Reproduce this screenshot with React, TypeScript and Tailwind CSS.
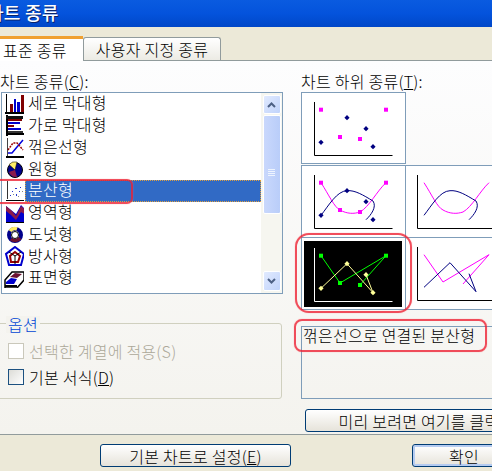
import React from "react";

const F = { s: [[20, 17.7], [85, 17.7], [39, 45], [59, 47]], d: [[46, 25.7], [65, 36.7], [20, 50.3], [72, 54.7]] };
const sq = (x: number, y: number, c: string, k: number) => <rect key={k} x={x - 2} y={y - 2} width={4} height={4} fill={c} />;
const di = (x: number, y: number, c: string, k: number) => <path key={k} d={`M${x} ${y - 2.6}L${x + 2.6} ${y}L${x} ${y + 2.6}L${x - 2.6} ${y}Z`} fill={c} />;

const smoothM = "M20 17.7C28 30 33 42 39 45C46 49 53 49 59 47C68 42 76 26 85 17.7";
const smoothN = "M20 50.3C28 40 36 26 46 25.7C54 25 62 30 72 36C76 42 70 50 65 54.7";
const lineM = "M20 17.7L39 45L85 17.7L59 47";
const lineN = "M20 50.3L46 25.7L72 54.7L65 36.7";

function Chart({ markers, m, n, axis = "#000", mc = "#ff00ff", nc = "#000080" }: { markers?: boolean; m?: string; n?: string; axis?: string; mc?: string; nc?: string }) {
  return (
    <svg width="104" height="72" viewBox="0 0 104 72" className="block -ml-px -mt-px">
      <path d="M13.5 10V63.5H91.5" fill="none" stroke={axis} strokeWidth="1" />
      {m && <path d={m} fill="none" stroke={mc} strokeWidth="1" />}
      {n && <path d={n} fill="none" stroke={nc} strokeWidth="1" />}
      {markers && F.s.map((p, i) => sq(p[0], p[1], mc, i))}
      {markers && F.d.map((p, i) => di(p[0], p[1], nc, i))}
    </svg>
  );
}

const Ic = ({ children }: { children: React.ReactNode }) => (
  <svg width="21" height="21" viewBox="0 0 21 21" className="shrink-0" shapeRendering="crispEdges">{children}</svg>
);
const icons = [
  <Ic key="0"><path d="M3 1V20" stroke="#000" fill="none" /><rect x="7" y="11" width="3" height="8" fill="#800000" /><rect x="11" y="6" width="2" height="13" fill="#00c" /><rect x="14" y="9" width="3" height="10" fill="#00c" /><rect x="18" y="2" width="3" height="17" fill="#800000" /><rect x="2" y="19" width="21" height="2" fill="#000" /></Ic>,
  <Ic key="1"><rect x="3" y="0" width="2" height="21" fill="#000" /><rect x="3" y="1" width="17" height="3" fill="#111" /><rect x="5" y="4" width="14" height="2" fill="#800000" /><rect x="5" y="7" width="12" height="2" fill="#00c" /><rect x="5" y="10" width="6" height="2" fill="#800000" /><rect x="5" y="13" width="13" height="2" fill="#00c" /><rect x="5" y="16" width="15" height="2" fill="#333" /><rect x="3" y="18" width="20" height="2" fill="#000" /></Ic>,
  <Ic key="2"><path d="M4 1V19" stroke="#444" /><rect x="3" y="19" width="20" height="2" fill="#000" /><path d="M5 16L9 16L14 10L20 3" stroke="#00d" fill="none" strokeWidth="1.5" shapeRendering="auto" /><path d="M5 13L10 6L14 6L20 13" stroke="#900" fill="none" strokeDasharray="2 1" strokeWidth="1.5" shapeRendering="auto" /></Ic>,
  <Ic key="3"><g shapeRendering="auto"><circle cx="12" cy="11" r="7.5" fill="#00008b" stroke="#000" /><path d="M12 11L6 5.5A8 8 0 0 1 14 3Z" fill="#ffee66" stroke="#000" strokeWidth=".5" /><path d="M12 11L6 13A7 7 0 0 0 14 18Z" fill="#8b1a4b" /></g></Ic>,
  <Ic key="4"><path d="M4 1V19" stroke="#333" /><rect x="3" y="20" width="20" height="1" fill="#000" /><g fill="#2233cc"><rect x="7" y="15" width="1" height="1" /><rect x="9" y="11" width="1" height="1" /><rect x="12" y="8" width="2" height="1" /><rect x="13" y="14" width="1" height="2" /><rect x="17" y="7" width="1" height="1" /><rect x="16" y="11" width="1" height="1" /></g><g fill="#888"><rect x="10" y="14" width="1" height="1" /><rect x="15" y="16" width="1" height="1" /><rect x="19" y="11" width="1" height="1" /></g></Ic>,
  <Ic key="5"><g shapeRendering="auto"><path d="M3 20V4L8 8L13 12L18 3L23 8V20Z" fill="#00c" /><path d="M3 4L9 9L13 14L18 4L23 8V13L18 10L13 18L8 13L3 9Z" fill="#8b1a4b" /></g><rect x="3" y="20" width="20" height="1" fill="#000" /></Ic>,
  <Ic key="6"><g shapeRendering="auto"><circle cx="12" cy="11" r="6" fill="none" stroke="#00008b" strokeWidth="4" /><path d="M7 7A6 6 0 0 1 14 5" fill="none" stroke="#ffee66" strokeWidth="3.5" /><path d="M8 15A6 6 0 0 0 17 14" fill="none" stroke="#6b1030" strokeWidth="3.5" /><circle cx="12" cy="11" r="3.5" fill="#fff" stroke="#000" /></g></Ic>,
  <Ic key="7"><g shapeRendering="auto" fill="none"><path d="M12 1L21 8L18 19H6L3 8Z" stroke="#00c" strokeWidth="2" /><path d="M12 6L17 10L15 16H8L7 10Z" stroke="#900" strokeWidth="2" /><path d="M12 10V18M12 10L6 6M12 10L18 6" stroke="#000" /></g></Ic>,
  <Ic key="8"><g shapeRendering="auto"><path d="M2 20L2 13L9 5H21V13L14 21H2Z" fill="#fff" stroke="#000" strokeWidth="1.5" /><path d="M7 10L12 6L19 7L14 11Z" fill="#6b1030" /><path d="M3 15L8 11L14 12L11 17H3Z" fill="#00c" /><path d="M2 19H14" stroke="#000" strokeWidth="2" /></g></Ic>,
];
const names = ["세로 막대형", "가로 막대형", "꺾은선형", "원형", "분산형", "영역형", "도넛형", "방사형", "표면형"];

function XpBtn({ className, children }: { className: string; children: React.ReactNode }) {
  return (
    <div className={`flex items-center justify-center h-[23px] shrink-0 rounded-[3px] border border-[#003c74] bg-gradient-to-b from-white to-[#e6e3da] text-black ${className}`}>
      <span className="whitespace-nowrap">{children}</span>
    </div>
  );
}

export default function App() {
  return (
    <div className="relative w-[492px] h-[471px] overflow-hidden bg-[#ece9d8] text-[16px] leading-none text-black font-['Noto_Sans_CJK_KR','Liberation_Sans',sans-serif] font-light [letter-spacing:0.25px]">
      {/* title */}
      <div className="h-[27px] overflow-hidden whitespace-nowrap bg-gradient-to-b from-[#0a5be0] via-[#0453dc] to-[#0047c8] text-white text-[18px] font-medium pt-[3px] [text-shadow:1px_1px_0_#0a246a]">
        <span className="inline-block -ml-[13px]">차트 종류</span>
      </div>

      {/* tabs */}
      <div className="h-[33px] flex items-end relative">
        <div className="relative z-10 w-[83px] h-[25px] -mb-[1px] bg-white border-t-[3px] border-[#f0a030] pl-[3px] pt-[3px] whitespace-nowrap">표준 종류</div>
        <div className="w-[138px] h-[23px] flex items-center justify-center bg-gradient-to-b from-white to-[#ecebe4] border border-b-0 border-[#919b9c] rounded-t-[3px] whitespace-nowrap">사용자 지정 종류</div>
      </div>

      {/* panel */}
      <div className="h-[375px] border-t border-b border-[#919b9c] bg-gradient-to-b from-[#fdfdfe] to-[#f4f3ee] flex overflow-hidden">
        {/* left */}
        <div className="w-[301px] shrink-0 flex flex-col pt-[12px]">
          <div className="h-[18px] whitespace-nowrap">차트 종류(<u>C</u>):</div>
          <div className="mt-[1px] ml-[1px] w-[282px] h-[202px] border border-[#7f9db9] bg-white flex">
            <div className="flex-1 flex flex-col">
              {names.map((n, i) => (
                <div key={n} className="h-[21.75px] flex items-center whitespace-nowrap">
                  <div className="w-[23px] pl-[1px] shrink-0 flex items-center">{icons[i]}</div>
                  <div className={i === 4 ? "flex-1 h-full flex items-center bg-[#316ac5] text-white border border-dotted border-[#e0a040] pb-[3px] pl-[2px]" : "pb-[3px] flex-1 pl-[3px]"}>{n}</div>
                </div>
              ))}
            </div>
            <div className="w-[21px] shrink-0 bg-[#f6f6f0] flex flex-col items-center py-[2px]">
              <div className="w-[18px] h-[19px] rounded-[2px] border border-white bg-gradient-to-br from-[#e1eafe] to-[#c0d3fb] flex items-center justify-center">
                <svg width="9" height="6" viewBox="0 0 9 6"><path d="M1 5L4.5 1.5L8 5" fill="none" stroke="#4d6185" strokeWidth="2" /></svg>
              </div>
              <div className="mt-[1px] w-[18px] h-[99px] rounded-[2px] border border-white bg-gradient-to-r from-[#c9d8fc] to-[#b9cdf9] flex flex-col items-center justify-center gap-[1px] pt-[16px]">
                <i className="block w-[7px] h-[1px] bg-[#eef4fe]" /><i className="block w-[7px] h-[1px] bg-[#eef4fe]" /><i className="block w-[7px] h-[1px] bg-[#eef4fe]" /><i className="block w-[7px] h-[1px] bg-[#eef4fe]" />
              </div>
              <div className="mt-auto w-[18px] h-[20px] rounded-[2px] border border-white bg-gradient-to-br from-[#e1eafe] to-[#c0d3fb] flex items-center justify-center">
                <svg width="9" height="6" viewBox="0 0 9 6"><path d="M1 1L4.5 4.5L8 1" fill="none" stroke="#4d6185" strokeWidth="2" /></svg>
              </div>
            </div>
          </div>
          {/* options */}
          <div className="relative ml-[-6px] mt-[29px] w-[288px] h-[76px] border border-[#d0d0bf] rounded-[3px] pl-[13px] pt-[14px]">
            <div className="absolute left-[11px] -top-[8px] bg-[#f4f3ee] px-[2px] text-[#0046d5] h-[17px]">옵션</div>
            <div className="flex items-center gap-[5px] h-[26px] text-[#aca899] whitespace-nowrap">
              <span className="w-[16px] h-[16px] border border-[#cac8bb] bg-white shrink-0" />
              <span>선택한 계열에 적용(S)</span>
            </div>
            <div className="flex items-center gap-[5px] h-[26px] whitespace-nowrap">
              <span className="w-[16px] h-[16px] border border-[#1c5180] bg-gradient-to-br from-[#dcdcd7] to-white shrink-0" />
              <span>기본 서식(<u>D</u>)</span>
            </div>
          </div>
        </div>

        {/* right */}
        <div className="w-[240px] shrink-0 flex flex-col pt-[12px]">
          <div className="h-[18px] whitespace-nowrap">차트 하위 종류(<u>T</u>):</div>
          <div className="mt-[1px] w-[105px] h-[72px] border border-[#7f9db9] overflow-hidden bg-white"><Chart markers /></div>
          <div className="mt-[1px] grid grid-cols-[105px_105px] grid-rows-[72px_73px] w-[210px]">
            <div className="border border-[#7f9db9] border-b-0 bg-white overflow-hidden"><Chart markers m={smoothM} n={smoothN} /></div>
            <div className="border-t border-[#7f9db9] bg-white overflow-hidden"><div className="-ml-[1px]"><Chart m={smoothM} n={smoothN} /></div></div>
            <div className="border border-[#7f9db9] bg-white pt-[3px] pl-[2px] overflow-hidden">
              <div className="bg-black w-[98px] h-[66px] overflow-hidden"><div className="-mt-[3px] -ml-[2px]"><Chart markers m={lineM} n={lineN} axis="#fff" mc="#00ff00" nc="#ffff99" /></div></div>
            </div>
            <div className="border-t border-b border-[#7f9db9] bg-white overflow-hidden"><div className="-ml-[1px]"><Chart m={lineM} n={lineN} /></div></div>
          </div>
          <div className="mt-[16px] w-[210px] h-[73px] border border-[#7f9db9] pl-[1px] whitespace-nowrap">꺾은선으로 연결된 분산형</div>
          <XpBtn className="mt-[10px] ml-[4px] w-[228px]">미리 보려면 여기를 클릭</XpBtn>
        </div>
      </div>

      {/* footer */}
      <div className="h-[36px] flex pt-[9px] whitespace-nowrap">
        <XpBtn className="ml-[100px] w-[191px]">기본 차트로 설정(<u>E</u>)</XpBtn>
        <XpBtn className="ml-[121px] w-[104px] border-[#003c74] shadow-[inset_0_0_0_2px_#b5cbf0]">확인</XpBtn>
      </div>

      {/* red annotations */}
      <div className="absolute left-[-10px] top-[179px] w-[143px] h-[25px] rounded-[6px] border-2 border-[#ee2233]/80 shadow-[0_0_1px_#f88]" />
      <div className="absolute left-[295px] top-[233px] w-[117px] h-[80px] rounded-[14px] border-2 border-[#ee2233]/80 shadow-[0_0_1px_#f88]" />
      <div className="absolute left-[294px] top-[319px] w-[193px] h-[33px] rounded-[8px] border-2 border-[#ee2233]/80 shadow-[0_0_1px_#f88]" />
    </div>
  );
}
